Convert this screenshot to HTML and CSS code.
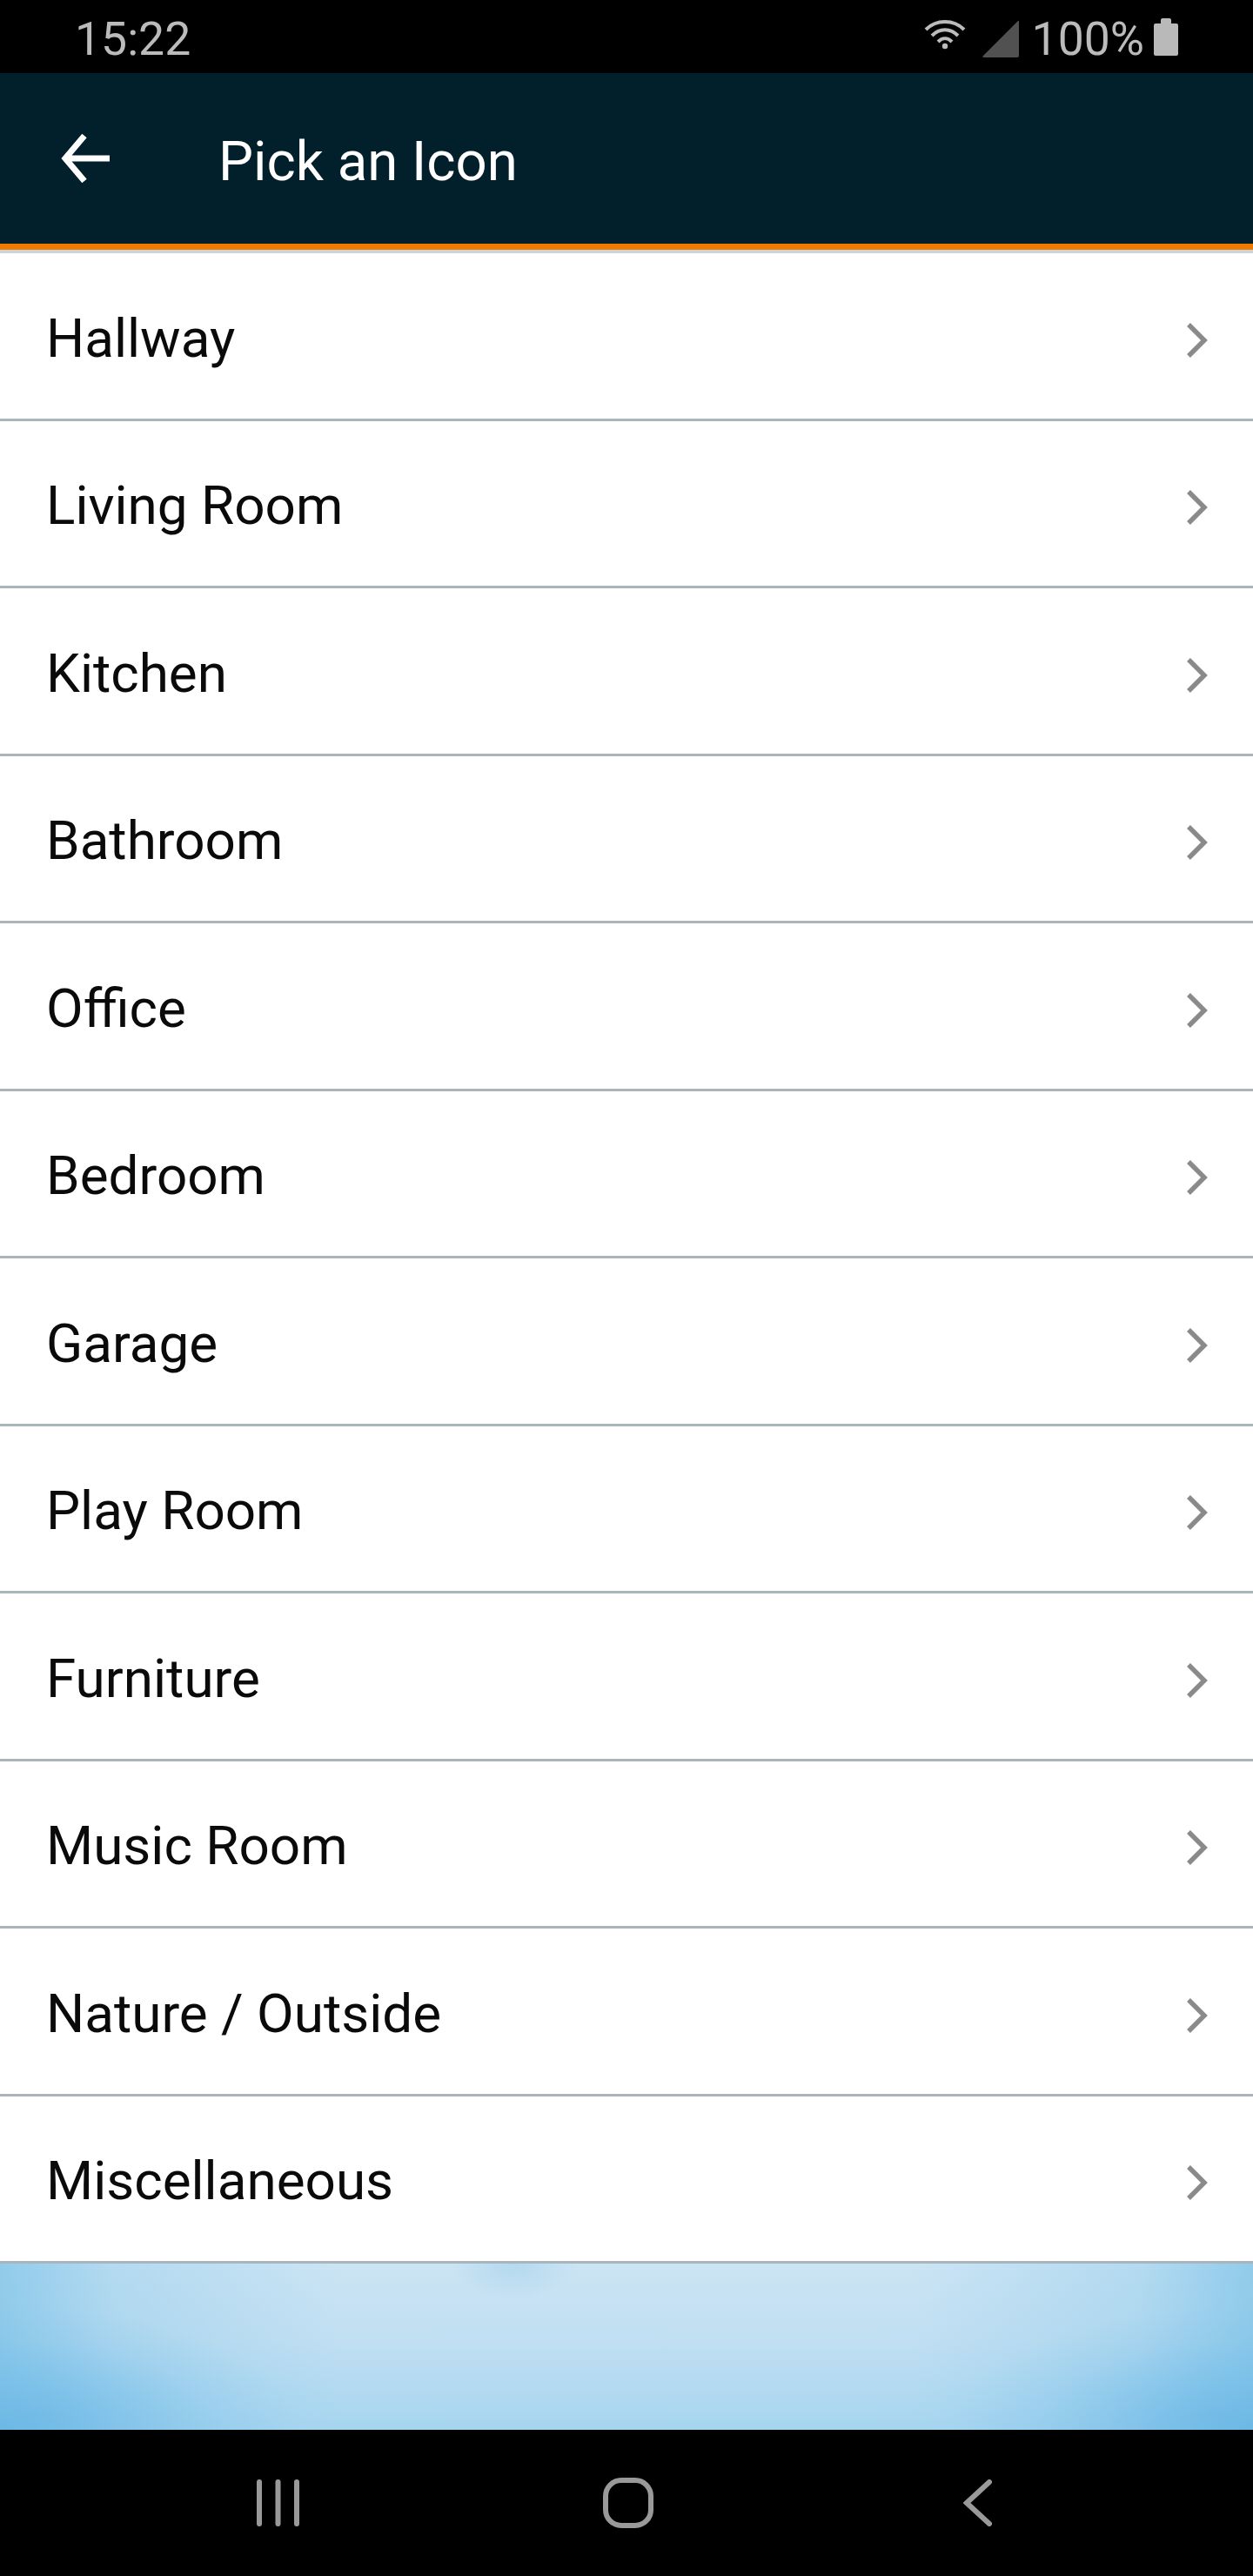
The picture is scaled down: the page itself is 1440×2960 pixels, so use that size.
FILE: index.html
```html
<!DOCTYPE html>
<html lang="en">
<head>
    <meta charset="UTF-8">
    <meta name="viewport" content="width=device-width, initial-scale=1.0">
    <title>Pick an Icon</title>
    <link rel="stylesheet" href="styles.css">
</head>
<body>
    <div class="phone">
        <div class="status-bar">
            <span class="status-time">15:22</span>
            <div class="status-right">
                <svg class="icon-wifi" width="48" height="36" viewBox="0 0 48 36">
                    <path d="M2 13 C14 1 34 1 46 13" fill="none" stroke="#bbb" stroke-width="4"/>
                    <path d="M9 20 C18 11 30 11 39 20" fill="none" stroke="#bbb" stroke-width="4"/>
                    <path d="M16 27 C21 22 27 22 32 27" fill="none" stroke="#bbb" stroke-width="4"/>
                    <circle cx="24" cy="32" r="3.2" fill="#bbb"/>
                </svg>
                <svg class="icon-signal" width="42" height="43" viewBox="0 0 42 43">
                    <path d="M41 1 Q42 0 42 2 L42 41 Q42 43 40 43 L2 43 Q-1 43 1 41 Z" fill="#515151"/>
                </svg>
                <span class="status-battery-text">100%</span>
                <svg class="icon-battery" width="28" height="43" viewBox="0 0 28 43">
                    <path d="M8 2 Q8 0 10 0 L18 0 Q20 0 20 2 L20 6 L26 6 Q28 6 28 8 L28 41 Q28 43 26 43 L2 43 Q0 43 0 41 L0 8 Q0 6 2 6 L8 6 Z" fill="#b9b9b9"/>
                </svg>
            </div>
        </div>

        <div class="app-header">
            <svg class="icon-back" width="56" height="56" viewBox="0 0 56 56">
                <path d="M56 28 H6 M27 2 L5 28 L27 54" fill="none" stroke="#fff" stroke-width="7"/>
            </svg>
            <h1 class="app-title">Pick an Icon</h1>
        </div>

        <ul class="room-list">
            <li class="room-row"><span>Hallway</span><svg class="chevron" width="24" height="40" viewBox="0 0 24 40"><path d="M2 2 L20 20 L2 38" fill="none" stroke="#8a8a8a" stroke-width="5.5"/></svg></li>
            <li class="room-row"><span>Living Room</span><svg class="chevron" width="24" height="40" viewBox="0 0 24 40"><path d="M2 2 L20 20 L2 38" fill="none" stroke="#8a8a8a" stroke-width="5.5"/></svg></li>
            <li class="room-row"><span>Kitchen</span><svg class="chevron" width="24" height="40" viewBox="0 0 24 40"><path d="M2 2 L20 20 L2 38" fill="none" stroke="#8a8a8a" stroke-width="5.5"/></svg></li>
            <li class="room-row"><span>Bathroom</span><svg class="chevron" width="24" height="40" viewBox="0 0 24 40"><path d="M2 2 L20 20 L2 38" fill="none" stroke="#8a8a8a" stroke-width="5.5"/></svg></li>
            <li class="room-row"><span>Office</span><svg class="chevron" width="24" height="40" viewBox="0 0 24 40"><path d="M2 2 L20 20 L2 38" fill="none" stroke="#8a8a8a" stroke-width="5.5"/></svg></li>
            <li class="room-row"><span>Bedroom</span><svg class="chevron" width="24" height="40" viewBox="0 0 24 40"><path d="M2 2 L20 20 L2 38" fill="none" stroke="#8a8a8a" stroke-width="5.5"/></svg></li>
            <li class="room-row"><span>Garage</span><svg class="chevron" width="24" height="40" viewBox="0 0 24 40"><path d="M2 2 L20 20 L2 38" fill="none" stroke="#8a8a8a" stroke-width="5.5"/></svg></li>
            <li class="room-row"><span>Play Room</span><svg class="chevron" width="24" height="40" viewBox="0 0 24 40"><path d="M2 2 L20 20 L2 38" fill="none" stroke="#8a8a8a" stroke-width="5.5"/></svg></li>
            <li class="room-row"><span>Furniture</span><svg class="chevron" width="24" height="40" viewBox="0 0 24 40"><path d="M2 2 L20 20 L2 38" fill="none" stroke="#8a8a8a" stroke-width="5.5"/></svg></li>
            <li class="room-row"><span>Music Room</span><svg class="chevron" width="24" height="40" viewBox="0 0 24 40"><path d="M2 2 L20 20 L2 38" fill="none" stroke="#8a8a8a" stroke-width="5.5"/></svg></li>
            <li class="room-row"><span>Nature / Outside</span><svg class="chevron" width="24" height="40" viewBox="0 0 24 40"><path d="M2 2 L20 20 L2 38" fill="none" stroke="#8a8a8a" stroke-width="5.5"/></svg></li>
            <li class="room-row"><span>Miscellaneous</span><svg class="chevron" width="24" height="40" viewBox="0 0 24 40"><path d="M2 2 L20 20 L2 38" fill="none" stroke="#8a8a8a" stroke-width="5.5"/></svg></li>
        </ul>

        <div class="sky"></div>

        <div class="nav-bar">
            <svg class="nav-recent" width="50" height="54" viewBox="0 0 50 54">
                <path d="M3 3 V51 M24.500 3 V51 M46 3 V51" fill="none" stroke="#999" stroke-width="6" stroke-linecap="round"/>
            </svg>
            <svg class="nav-home" width="58" height="58" viewBox="0 0 58 58">
                <rect x="3" y="3" width="52" height="52" rx="18" fill="none" stroke="#999" stroke-width="6"/>
            </svg>
            <svg class="nav-back" width="34" height="54" viewBox="0 0 34 54">
                <path d="M30 3 L4 27 L30 51" fill="none" stroke="#999" stroke-width="6" stroke-linecap="round"/>
            </svg>
        </div>
    </div>
</body>
</html>
```

FILE: styles.css
```css
* {
    box-sizing: border-box;
}

body {
    margin: 0;
    font-family: Roboto, "Liberation Sans", sans-serif;
    background-color: #fff;
}

.phone {
    width: 1440px;
    height: 2960px;
    display: flex;
    flex-direction: column;
}

.status-bar {
    height: 84px;
    flex: none;
    display: flex;
    align-items: center;
    justify-content: space-between;
    padding: 0 86px 0 86px;
    background-color: #000;
    color: #bbb;
    font-size: 53.5px;
}

.status-time {
    padding-top: 4px;
}

.status-right {
    display: flex;
    align-items: center;
}

.icon-wifi {
    margin: -7px 19px 0 0;
}

.icon-signal {
    margin: 4px 15px 0 0;
}

.status-battery-text {
    margin-right: 11px;
    padding-top: 4px;
}

.app-header {
    height: 203px;
    flex: none;
    display: flex;
    align-items: center;
    padding-left: 70px;
    background-color: #02202c;
    border-bottom: 7px solid #ee7b00;
}

.app-title {
    margin: 0 0 0 125px;
    padding-top: 7px;
    font-size: 63.5px;
    font-weight: 400;
    color: #fff;
}

.room-list {
    list-style: none;
    margin: 0;
    padding: 0;
    flex: none;
    border-top: 4px solid #ccd3d9;
}

.room-row {
    height: 192.5px;
    display: flex;
    align-items: center;
    justify-content: space-between;
    padding: 5px 52px 0 53px;
    border-bottom: 3px solid #aab4bb;
    font-size: 62px;
    color: #0a0a0a;
}

.chevron {
    margin-top: 5px;
}

.sky {
    flex: 1;
    background:
        radial-gradient(ellipse 5% 22% at 41% 0%, rgba(174, 214, 237, 0.8) 0%, rgba(174, 214, 237, 0) 100%),
        radial-gradient(ellipse 24% 75% at 0% 100%, #6cb8e6 0%, rgba(108, 184, 230, 0.5) 40%, rgba(108, 184, 230, 0.15) 72%, rgba(108, 184, 230, 0) 100%),
        radial-gradient(ellipse 24% 75% at 100% 100%, #6cb8e6 0%, rgba(108, 184, 230, 0.5) 40%, rgba(108, 184, 230, 0.15) 72%, rgba(108, 184, 230, 0) 100%),
        linear-gradient(to right, rgba(125, 195, 232, 0.75), rgba(125, 195, 232, 0.3) 9%, rgba(125, 195, 232, 0) 27%, rgba(125, 195, 232, 0) 73%, rgba(125, 195, 232, 0.3) 91%, rgba(125, 195, 232, 0.75)),
        linear-gradient(to bottom, #cbe4f4, #c1dff2 45%, #a6d5f0);
}

.nav-bar {
    height: 168px;
    flex: none;
    background-color: #000;
    display: grid;
    grid-template-columns: 398px 414px 1fr;
    align-items: center;
    padding-left: 295px;
}
```
